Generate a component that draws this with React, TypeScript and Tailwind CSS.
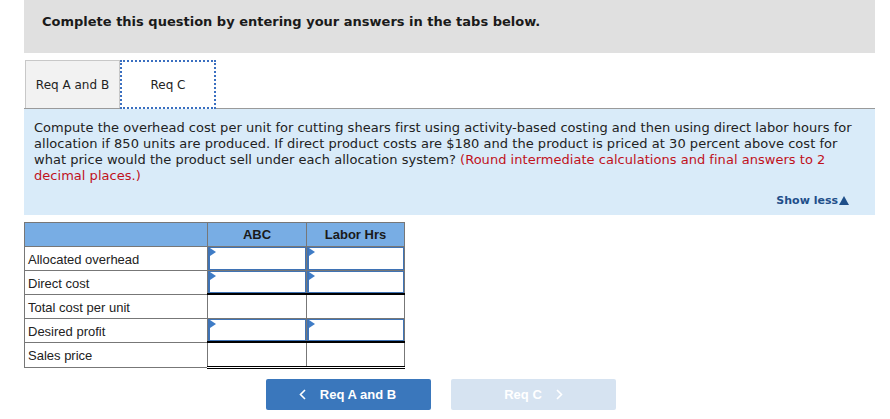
const rows = [
  { label: "Allocated overhead", input: true, bottom: "" },
  { label: "Direct cost", input: true, bottom: "single" },
  { label: "Total cost per unit", input: false, bottom: "" },
  { label: "Desired profit", input: true, bottom: "single" },
  { label: "Sales price", input: false, bottom: "double" },
];

const InputCell = ({ h }: { h: string }) => (
  <div className={"relative border border-[#3f73b5] border-l-2 bg-white " + h}>
    <div className="absolute left-0 top-0 w-0 h-0 border-t-[4px] border-b-[4px] border-l-[6px] border-t-transparent border-b-transparent border-l-[#3f7cc6]" />
  </div>
);

const App = () => {
  return (
    <div className="w-[890px] h-[419px] bg-white overflow-hidden" style={{ fontFamily: '"DejaVu Sans", Verdana, sans-serif' }}>
      <div className="ml-[24px] w-[851px]">
        <div className="h-[53px] bg-[#e0e0e0] pl-[18px] flex items-center pb-[9px]">
          <span className="text-[13px] font-bold text-[#1a1a1a]">Complete this question by entering your answers in the tabs below.</span>
        </div>

        <div className="mt-[7px] flex items-end h-[49px] border-b border-[#9a9a9a]">
          <div className="w-[95px] h-[48px] ml-[1px] bg-[#f2f2f2] border border-b-0 border-[#c8c8c8] flex items-center justify-center text-[12px] text-[#222]">
            Req A and B
          </div>
          <div className="w-[96px] h-[49px] -mb-[1px] bg-white border-2 border-dotted border-[#3a6fc0] flex items-center justify-center text-[12px] text-[#222]">
            Req C
          </div>
        </div>

        <div className="h-[106px] bg-[#d9ebf9] px-[10px] pt-[11px] relative">
          <p className="text-[13px] leading-[16px] text-[#222] tracking-[0.03px]">
            Compute the overhead cost per unit for cutting shears first using activity-based costing and then using direct labor hours for allocation if 850 units are produced. If direct product costs are $180 and the product is priced at 30 percent above cost for what price would the product sell under each allocation system?{" "}
            <span className="text-[#c0121c]">(Round intermediate calculations and final answers to 2 decimal places.)</span>
          </p>
          <div className="absolute right-[26px] bottom-[6px] flex items-center gap-[1px] text-[11px] font-bold text-[#1f4f8a]">
            Show less
            <svg width="10" height="9" viewBox="0 0 10 9"><path d="M5 0 L10 9 L0 9 Z" fill="#1f4f8a" /></svg>
          </div>
        </div>

        <table className="mt-[7px] border-collapse text-[13px] text-[#222]" style={{ fontFamily: '"Liberation Sans", Arial, sans-serif' }}>
          <thead>
            <tr className="h-[24px] bg-[#78ade4]">
              <th className="w-[183px] border border-[#777]"></th>
              <th className="w-[99px] border border-[#777] font-bold text-center text-[#1a1a1a] pt-[1px]">ABC</th>
              <th className="w-[98px] border border-[#777] font-bold text-center text-[#1a1a1a] pt-[1px]">Labor Hrs</th>
            </tr>
          </thead>
          <tbody>
            {rows.map((r) => {
              const h = r.bottom === "single" ? "h-[22px]" : r.bottom === "double" ? "h-[23px]" : "h-[23px]";
              return (
                <tr key={r.label}>
                  <td className="border border-[#777] pl-[3px] pt-[3px] align-middle leading-[18px]">{r.label}</td>
                  {[0, 1].map((i) => (
                    <td
                      key={i}
                      className={
                        "border border-[#777] p-0 " +
                        (r.bottom === "single" ? "border-b-2 border-b-black" : r.bottom === "double" ? "border-b-[3px] border-b-black border-double" : "")
                      }
                    >
                      {r.input ? <InputCell h={h} /> : <div className={h} />}
                    </td>
                  ))}
                </tr>
              );
            })}
          </tbody>
        </table>

        <div className="mt-[10px] pl-[242px] flex gap-[20px]" style={{ fontFamily: '"Liberation Sans", Arial, sans-serif' }}>
          <button className="w-[165px] h-[31px] rounded-[2px] bg-[#3a77bc] text-white text-[13px] font-bold flex items-center justify-center gap-[14px] pr-[2px]">
            <svg width="7" height="11" viewBox="0 0 7 11"><path d="M6 1 L1.5 5.5 L6 10" stroke="white" strokeWidth="1.6" fill="none" /></svg>
            Req A and B
          </button>
          <button className="w-[165px] h-[31px] rounded-[2px] bg-[#d6e3f1] text-white text-[13px] font-bold flex items-center justify-center gap-[14px]">
            Req C
            <svg width="7" height="11" viewBox="0 0 7 11"><path d="M1 1 L5.5 5.5 L1 10" stroke="white" strokeWidth="1.6" fill="none" /></svg>
          </button>
        </div>
      </div>
    </div>
  );
};

export default App;
